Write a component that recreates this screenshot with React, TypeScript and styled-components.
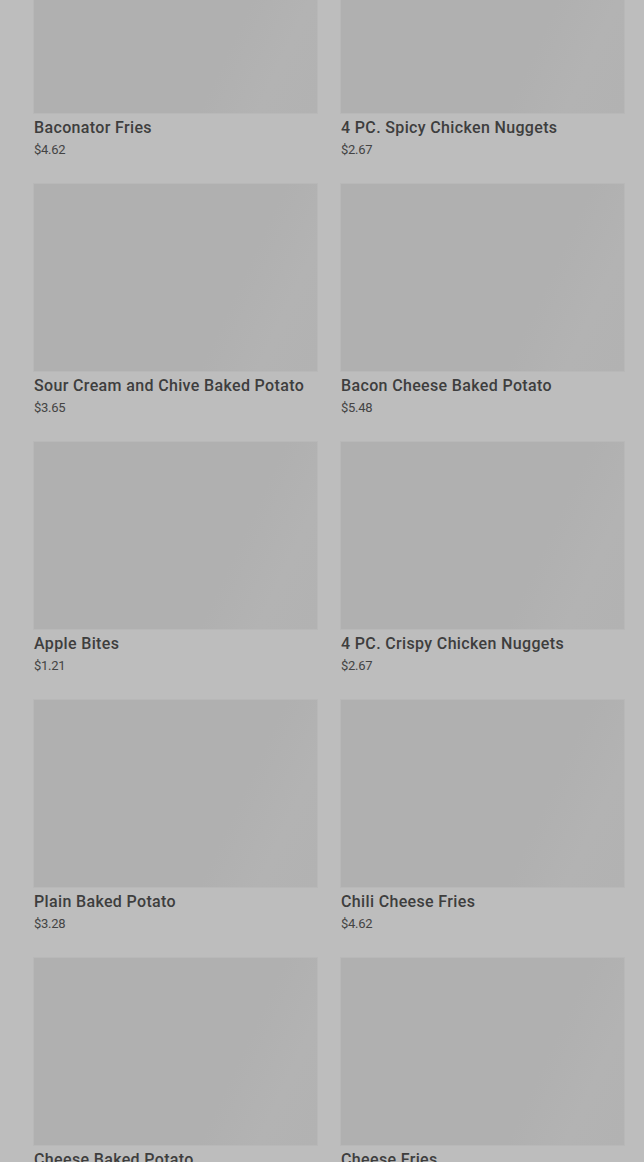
import styled, { createGlobalStyle } from "styled-components";

const GlobalStyle = createGlobalStyle`
  html, body {
    margin: 0;
    padding: 0;
    background: #bdbdbd;
    overflow: hidden;
  }
  body {
    font-family: Roboto, "Liberation Sans", Arial, sans-serif;
  }
`;

const Page = styled.main`
  height: 1162px;
  overflow: hidden;
  background: #bdbdbd;
`;

const Grid = styled.div`
  display: grid;
  grid-template-columns: 283px 283px;
  column-gap: 24px;
  row-gap: 25px;
  padding: 0 20px 0 34px;
  margin-top: -74px;
`;

const Card = styled.article`
  display: flex;
  flex-direction: column;
`;

const Thumb = styled.div`
  height: 187px;
  background: linear-gradient(
    115deg,
    #b0b0b0 0%,
    #b0b0b0 68%,
    #b3b3b3 84%,
    #b2b2b2 100%
  );
  box-shadow: 0 0 0 1px #b8b8b8;
`;

const Title = styled.h3`
  margin: 4px 0 0;
  font-size: 16px;
  line-height: 21px;
  font-weight: 500;
  color: #3e3e3e;
  white-space: nowrap;
  letter-spacing: 0.35px;
`;

const Price = styled.span`
  margin-top: 2px;
  font-size: 13px;
  line-height: 19px;
  font-weight: 400;
  color: #444444;
  letter-spacing: -0.3px;
`;

type Item = { name: string; price: string };

const items: Item[] = [
  { name: "Baconator Fries", price: "$4.62" },
  { name: "4 PC. Spicy Chicken Nuggets", price: "$2.67" },
  { name: "Sour Cream and Chive Baked Potato", price: "$3.65" },
  { name: "Bacon Cheese Baked Potato", price: "$5.48" },
  { name: "Apple Bites", price: "$1.21" },
  { name: "4 PC. Crispy Chicken Nuggets", price: "$2.67" },
  { name: "Plain Baked Potato", price: "$3.28" },
  { name: "Chili Cheese Fries", price: "$4.62" },
  { name: "Cheese Baked Potato", price: "$3.89" },
  { name: "Cheese Fries", price: "$3.89" },
];

const App = () => {
  return (
    <Page>
      <GlobalStyle />
      <Grid>
        {items.map((item) => (
          <Card key={item.name}>
            <Thumb />
            <Title>{item.name}</Title>
            <Price>{item.price}</Price>
          </Card>
        ))}
      </Grid>
    </Page>
  );
};

export default App;
